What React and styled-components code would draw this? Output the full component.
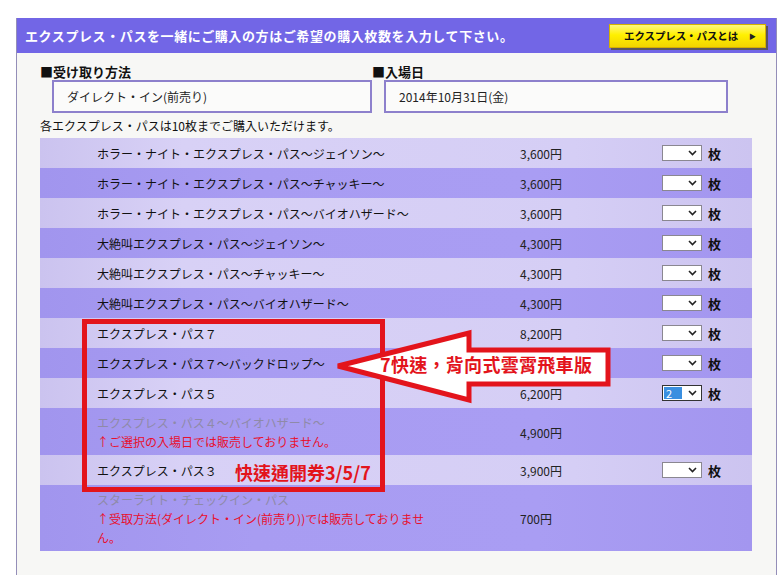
import React from 'react';
import styled, { createGlobalStyle } from 'styled-components';

const GlobalStyle = createGlobalStyle`
  body {
    margin: 0;
    background: #fff;
    font-family: "Noto Sans CJK JP", "Noto Sans", sans-serif;
    color: #111;
  }
`;

const Panel = styled.div`
  margin: 18px 0 0 16px;
  width: 761px;
  min-height: 557px;
  box-sizing: border-box;
  border-left: 1px solid #948eb8;
  border-right: 1px solid #948eb8;
  background: #f7f7f5;
`;

const Header = styled.div`
  height: 35px;
  background: #7266e6;
  display: flex;
  align-items: center;
  justify-content: space-between;
  padding: 0 10px 0 8px;
`;

const HeaderTitle = styled.div`
  color: #fff;
  font-size: 13px;
  font-weight: 700;
  letter-spacing: 0.6px;
`;

const AboutButton = styled.div`
  width: 157px;
  height: 24px;
  box-sizing: border-box;
  display: flex;
  align-items: center;
  justify-content: space-between;
  padding: 0 9px 0 14px;
  background: linear-gradient(to bottom, #fff680 0%, #fff000 45%, #f2d400 100%);
  border: 1px solid #d4b000;
  box-shadow: 2px 2px 0 #5a5560;
  font-size: 10.5px;
  font-weight: 700;
  color: #111;
  letter-spacing: -0.1px;
`;

const Triangle = styled.span`
  font-size: 7px;
  color: #222;
`;

const Body = styled.div`
  padding: 10px 0 0 23px;
`;

const FormGrid = styled.div`
  display: grid;
  grid-template-columns: 332px 356px;
`;

const Label = styled.div`
  font-size: 13px;
  font-weight: 700;
  line-height: 17px;
`;

const ValueBox = styled.div`
  margin-left: 12px;
  height: 33px;
  box-sizing: border-box;
  border: 2px solid #8d80cc;
  background: #fbfbfa;
  display: flex;
  align-items: center;
  padding-left: 13px;
  font-size: 12px;
  color: #222;
`;

const Note = styled.div`
  margin-top: 4px;
  font-size: 12px;
  line-height: 17px;
`;

const Table = styled.div`
  position: relative;
  margin-top: 4px;
  width: 712px;
`;

const Row = styled.div`
  display: grid;
  grid-template-columns: 480px 142px 1fr;
  align-items: center;
  min-height: 30px;
  padding: ${p => (p.$tall ? '5px 0 4px' : '0')};
  box-sizing: border-box;
  background: ${p =>
    p.$dark
      ? 'linear-gradient(to right, #a195ee 0%, #a89cf2 30%, #a99df3 70%, #a396ef 100%)'
      : 'linear-gradient(to right, #cbc3ef 0%, #d8d1f6 20%, #d5cef5 75%, #ccc4f0 100%)'};
`;

const NameCell = styled.div`
  padding-left: 57px;
  font-size: 12px;
  line-height: 19px;
  color: ${p => (p.$disabled ? '#8f8aa8' : '#111')};
  white-space: nowrap;
`;

const Warning = styled.div`
  color: #e8102e;
`;

const Price = styled.div`
  font-size: 12px;
  color: #222;
`;

const QtyCell = styled.div`
  display: flex;
  align-items: center;
  gap: 6px;
`;

const SelectBox = styled.div`
  width: 40px;
  height: 16px;
  box-sizing: border-box;
  border: 1px solid ${p => (p.$focused ? '#333' : '#8a8790')};
  background: #fff;
  display: flex;
  align-items: center;
  justify-content: space-between;
  padding: 0 4px 0 1px;
`;

const SelectValue = styled.span`
  width: 18px;
  height: 12px;
  line-height: 12px;
  font-size: 11px;
  padding-left: 2px;
  box-sizing: border-box;
  color: #fff;
  background: ${p => (p.$value ? '#3a8fe0' : 'transparent')};
`;

const Mai = styled.span`
  font-size: 13px;
  font-weight: 700;
`;

const RedFrame = styled.div`
  position: absolute;
  left: 42px;
  top: 181px;
  width: 303px;
  height: 173px;
  box-sizing: border-box;
  border: 5px solid #e3141c;
  pointer-events: none;
`;

const ArrowWrap = styled.div`
  position: absolute;
  left: 293px;
  top: 190px;
  width: 280px;
  height: 76px;
`;

const ArrowText = styled.span`
  position: absolute;
  left: 47px;
  top: 24px;
  font-family: "Noto Sans CJK TC", "Noto Sans", sans-serif;
  font-size: 18px;
  line-height: 24px;
  font-weight: 700;
  color: #e3141c;
  white-space: nowrap;
  letter-spacing: 0.3px;
`;

const SideNote = styled.span`
  position: absolute;
  left: 195px;
  top: 321px;
  font-family: "Noto Sans CJK TC", "Noto Sans", sans-serif;
  font-size: 18px;
  line-height: 26px;
  font-weight: 700;
  color: #e3141c;
  white-space: nowrap;
`;

const rows = [
  { name: 'ホラー・ナイト・エクスプレス・パス～ジェイソン～', price: '3,600円' },
  { name: 'ホラー・ナイト・エクスプレス・パス～チャッキー～', price: '3,600円' },
  { name: 'ホラー・ナイト・エクスプレス・パス～バイオハザード～', price: '3,600円' },
  { name: '大絶叫エクスプレス・パス～ジェイソン～', price: '4,300円' },
  { name: '大絶叫エクスプレス・パス～チャッキー～', price: '4,300円' },
  { name: '大絶叫エクスプレス・パス～バイオハザード～', price: '4,300円' },
  { name: 'エクスプレス・パス７', price: '8,200円' },
  // price of this row sits under the arrow annotation
  { name: 'エクスプレス・パス７～バックドロップ～', price: '' },
  { name: 'エクスプレス・パス５', price: '6,200円', value: '2' },
  {
    name: 'エクスプレス・パス４～バイオハザード～',
    price: '4,900円',
    warning: ['↑ご選択の入場日では販売しておりません。'],
  },
  { name: 'エクスプレス・パス３', price: '3,900円' },
  {
    name: 'スターライト・チェックイン・パス',
    price: '700円',
    warning: ['↑受取方法(ダイレクト・イン(前売り))では販売しておりませ', 'ん。'],
  },
];

function Chevron() {
  return (
    <svg width="9" height="6" viewBox="0 0 9 6">
      <path d="M1 1 L4.5 4.5 L8 1" fill="none" stroke="#222" strokeWidth="1.6" />
    </svg>
  );
}

function Arrow() {
  return (
    <ArrowWrap>
      <svg width="280" height="76" viewBox="0 0 280 76">
        <path
          d="M5 38 L136 5 L136 22 L275 22 L275 56 L136 56 L136 72 Z"
          fill="#fff"
          stroke="#e3141c"
          strokeWidth="5"
          strokeLinejoin="miter"
        />
      </svg>
      <ArrowText>7快速，背向式雲霄飛車版</ArrowText>
    </ArrowWrap>
  );
}

export default function App() {
  return (
    <>
      <GlobalStyle />
      <Panel>
        <Header>
          <HeaderTitle>エクスプレス・パスを一緒にご購入の方はご希望の購入枚数を入力して下さい。</HeaderTitle>
          <AboutButton>
            エクスプレス・パスとは
            <Triangle>▶</Triangle>
          </AboutButton>
        </Header>
        <Body>
          <FormGrid>
            <div>
              <Label>■受け取り方法</Label>
              <ValueBox>ダイレクト・イン(前売り)</ValueBox>
            </div>
            <div>
              <Label>■入場日</Label>
              <ValueBox>2014年10月31日(金)</ValueBox>
            </div>
          </FormGrid>
          <Note>各エクスプレス・パスは10枚までご購入いただけます。</Note>
          <Table>
            {rows.map((r, i) => (
              <Row key={i} $dark={i % 2 === 1} $tall={!!r.warning}>
                <NameCell $disabled={!!r.warning}>
                  {r.name}
                  {r.warning && r.warning.map((w, j) => <Warning key={j}>{w}</Warning>)}
                </NameCell>
                <Price>{r.price}</Price>
                {!r.warning && (
                  <QtyCell>
                    <SelectBox $focused={!!r.value}>
                      <SelectValue $value={!!r.value}>{r.value}</SelectValue>
                      <Chevron />
                    </SelectBox>
                    <Mai>枚</Mai>
                  </QtyCell>
                )}
              </Row>
            ))}
            <RedFrame />
            <Arrow />
            <SideNote>快速通開券3/5/7</SideNote>
          </Table>
        </Body>
      </Panel>
    </>
  );
}
